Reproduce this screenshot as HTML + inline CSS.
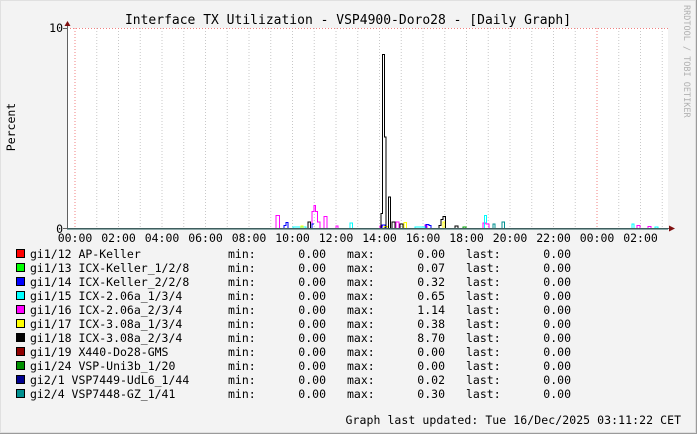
<!DOCTYPE html>
<html><head><meta charset="utf-8"><style>
html,body{margin:0;padding:0;background:#f3f3f3}
svg{display:block}
text{font-family:"DejaVu Sans Mono","Liberation Mono",monospace;font-size:11.5px;fill:#000}
</style></head><body>
<svg width="697" height="434" viewBox="0 0 697 434" xmlns="http://www.w3.org/2000/svg">
<rect x="0" y="0" width="697" height="434" fill="#f3f3f3"/>
<rect x="0.5" y="0.5" width="695" height="432" fill="none" stroke="#e0e0e0"/>
<line x1="696.5" y1="0" x2="696.5" y2="434" stroke="#9a9a9a"/>
<line x1="0" y1="433.5" x2="697" y2="433.5" stroke="#9a9a9a"/>
<rect x="67" y="28" width="601" height="201" fill="#fff"/>
<g stroke="#c8c8c8" stroke-dasharray="1,2" stroke-width="1">
<line x1="96.75" y1="28" x2="96.75" y2="229"/><line x1="118.5" y1="28" x2="118.5" y2="229"/><line x1="140.25" y1="28" x2="140.25" y2="229"/><line x1="162" y1="28" x2="162" y2="229"/><line x1="183.75" y1="28" x2="183.75" y2="229"/><line x1="205.5" y1="28" x2="205.5" y2="229"/><line x1="227.25" y1="28" x2="227.25" y2="229"/><line x1="249" y1="28" x2="249" y2="229"/><line x1="270.75" y1="28" x2="270.75" y2="229"/><line x1="292.5" y1="28" x2="292.5" y2="229"/><line x1="314.25" y1="28" x2="314.25" y2="229"/><line x1="336" y1="28" x2="336" y2="229"/><line x1="357.75" y1="28" x2="357.75" y2="229"/><line x1="379.5" y1="28" x2="379.5" y2="229"/><line x1="401.25" y1="28" x2="401.25" y2="229"/><line x1="423" y1="28" x2="423" y2="229"/><line x1="444.75" y1="28" x2="444.75" y2="229"/><line x1="466.5" y1="28" x2="466.5" y2="229"/><line x1="488.25" y1="28" x2="488.25" y2="229"/><line x1="510" y1="28" x2="510" y2="229"/><line x1="531.75" y1="28" x2="531.75" y2="229"/><line x1="553.5" y1="28" x2="553.5" y2="229"/><line x1="575.25" y1="28" x2="575.25" y2="229"/><line x1="618.75" y1="28" x2="618.75" y2="229"/><line x1="640.5" y1="28" x2="640.5" y2="229"/><line x1="662.25" y1="28" x2="662.25" y2="229"/>
</g>
<g stroke="#f08080" stroke-dasharray="1,2" stroke-width="1">
<line x1="75" y1="28" x2="75" y2="229"/><line x1="597" y1="28" x2="597" y2="229"/>
<line x1="67" y1="28.5" x2="668" y2="28.5"/>
</g>
<g fill="none" stroke-width="1">
<path stroke="#ff00ff" d="M276 228.5V215.5H279.5V228.5M312 228.5V211.5H314V205.5H315.5V211.5H317.5V222H320V228.5M324 228.5V216.5H327V228.5M336 228.5V226H338V228.5M380 228.5V226H383M396 228.5V222H399V228.5M425 228.5V225H427V228.5M483 228.5V223H486V224H489V228.5M637 228.5V225.5H640V228.5M648 228.5V226.5H651V228.5"/>
<path stroke="#0000ff" d="M284 228.5V225.5H286V222.5H288V228.5M312 228.5V224H314M382 228.5V225H385V228.5M426 228.5V224.5H429V225.5H431V228.5"/>
<path stroke="#00ffff" d="M293 228.5V227H306V228.5M350 228.5V223H352.5V228.5M415 228.5V227H425V228.5M484.5 228.5V215.5H486.5V223M502 228.5V227.5M632 228.5V224H634V228.5M655 228.5V227H658V228.5"/>
<path stroke="#ffff00" d="M301 228.5V226H303V228.5M384 228.5V226.5H388V228.5M404 228.5V222.5H406.5V228.5M443 228.5V222H445V228.5"/>
<path stroke="#000" d="M308 228.5V222H310.5V228.5M381 228.5V213.5H382.5V54.5H384.5V137H386V228.5M388.5 228.5V197H390.5V228.5M392 228.5V222H395V228.5M400 228.5V224H403V228.5M439 228.5V225.5H441V219.5H443V216.5H445.5V228.5M455 228.5V226H458V228.5"/>
<path stroke="#009090" d="M493 228.5V224H495V228.5M502 228.5V222H504.5V228.5"/>
<path stroke="#00a000" d="M463 228.5V227H466V228.5"/>
</g>
<line x1="67.5" y1="229" x2="67.5" y2="24" stroke="#606060"/>
<line x1="63" y1="228.5" x2="671" y2="228.5" stroke="#606060"/>
<line x1="67" y1="229" x2="668" y2="229" stroke="#1f5a5a"/>
<polygon points="64.5,26 70.5,26 67.5,21" fill="#7f1010"/>
<polygon points="669,225.5 669,231.5 675,228.5" fill="#7f1010"/>
<g stroke="#606060"><line x1="63" y1="28.5" x2="67" y2="28.5"/></g>
<text x="63" y="32" text-anchor="end">10</text>
<text x="63" y="233" text-anchor="end">0</text>
<text transform="translate(15,127) rotate(-90)" text-anchor="middle">Percent</text>
<g text-anchor="middle" font-size="11">
<text x="75" y="242">00:00</text><text x="118.5" y="242">02:00</text><text x="162" y="242">04:00</text><text x="205.5" y="242">06:00</text><text x="249" y="242">08:00</text><text x="292.5" y="242">10:00</text><text x="336" y="242">12:00</text><text x="379.5" y="242">14:00</text><text x="423" y="242">16:00</text><text x="466.5" y="242">18:00</text><text x="510" y="242">20:00</text><text x="553.5" y="242">22:00</text><text x="597" y="242">00:00</text><text x="640.5" y="242">02:00</text>
</g>
<text x="348" y="24" text-anchor="middle" style="font-size:13px">Interface TX Utilization - VSP4900-Doro28 - [Daily Graph]</text>
<text transform="translate(684,5) rotate(90)" style="font-size:8.5px;fill:#b0b0b0">RRDTOOL / TOBI OETIKER</text>
<g stroke="#000" stroke-width="1">
<rect x="16.5" y="249.5" width="8" height="8" fill="#ff0000"/>
<rect x="16.5" y="263.5" width="8" height="8" fill="#00ff00"/>
<rect x="16.5" y="277.5" width="8" height="8" fill="#0000ff"/>
<rect x="16.5" y="291.5" width="8" height="8" fill="#00ffff"/>
<rect x="16.5" y="305.5" width="8" height="8" fill="#ff00ff"/>
<rect x="16.5" y="319.5" width="8" height="8" fill="#ffff00"/>
<rect x="16.5" y="333.5" width="8" height="8" fill="#000000"/>
<rect x="16.5" y="347.5" width="8" height="8" fill="#900000"/>
<rect x="16.5" y="361.5" width="8" height="8" fill="#009000"/>
<rect x="16.5" y="375.5" width="8" height="8" fill="#000090"/>
<rect x="16.5" y="389.5" width="8" height="8" fill="#009090"/>
</g>
<g>
<text x="30" y="258">gi1/12 AP-Keller</text>
<text x="30" y="272">gi1/13 ICX-Keller_1/2/8</text>
<text x="30" y="286">gi1/14 ICX-Keller_2/2/8</text>
<text x="30" y="300">gi1/15 ICX-2.06a_1/3/4</text>
<text x="30" y="314">gi1/16 ICX-2.06a_2/3/4</text>
<text x="30" y="328">gi1/17 ICX-3.08a_1/3/4</text>
<text x="30" y="342">gi1/18 ICX-3.08a_2/3/4</text>
<text x="30" y="356">gi1/19 X440-Do28-GMS</text>
<text x="30" y="370">gi1/24 VSP-Uni3b_1/20</text>
<text x="30" y="384">gi2/1 VSP7449-UdL6_1/44</text>
<text x="30" y="398">gi2/4 VSP7448-GZ_1/41</text>
</g>
<g>
<text x="228" y="258">min:</text><text x="228" y="272">min:</text><text x="228" y="286">min:</text><text x="228" y="300">min:</text><text x="228" y="314">min:</text><text x="228" y="328">min:</text><text x="228" y="342">min:</text><text x="228" y="356">min:</text><text x="228" y="370">min:</text><text x="228" y="384">min:</text><text x="228" y="398">min:</text>
<text x="347" y="258">max:</text><text x="347" y="272">max:</text><text x="347" y="286">max:</text><text x="347" y="300">max:</text><text x="347" y="314">max:</text><text x="347" y="328">max:</text><text x="347" y="342">max:</text><text x="347" y="356">max:</text><text x="347" y="370">max:</text><text x="347" y="384">max:</text><text x="347" y="398">max:</text>
<text x="466" y="258">last:</text><text x="466" y="272">last:</text><text x="466" y="286">last:</text><text x="466" y="300">last:</text><text x="466" y="314">last:</text><text x="466" y="328">last:</text><text x="466" y="342">last:</text><text x="466" y="356">last:</text><text x="466" y="370">last:</text><text x="466" y="384">last:</text><text x="466" y="398">last:</text>
</g>
<g text-anchor="end">
<text x="326" y="258">0.00</text><text x="326" y="272">0.00</text><text x="326" y="286">0.00</text><text x="326" y="300">0.00</text><text x="326" y="314">0.00</text><text x="326" y="328">0.00</text><text x="326" y="342">0.00</text><text x="326" y="356">0.00</text><text x="326" y="370">0.00</text><text x="326" y="384">0.00</text><text x="326" y="398">0.00</text>
<text x="445" y="258">0.00</text><text x="445" y="272">0.07</text><text x="445" y="286">0.32</text><text x="445" y="300">0.65</text><text x="445" y="314">1.14</text><text x="445" y="328">0.38</text><text x="445" y="342">8.70</text><text x="445" y="356">0.00</text><text x="445" y="370">0.00</text><text x="445" y="384">0.02</text><text x="445" y="398">0.30</text>
<text x="571" y="258">0.00</text><text x="571" y="272">0.00</text><text x="571" y="286">0.00</text><text x="571" y="300">0.00</text><text x="571" y="314">0.00</text><text x="571" y="328">0.00</text><text x="571" y="342">0.00</text><text x="571" y="356">0.00</text><text x="571" y="370">0.00</text><text x="571" y="384">0.00</text><text x="571" y="398">0.00</text>
</g>
<text x="345.5" y="424" textLength="335.5" lengthAdjust="spacing">Graph last updated: Tue 16/Dec/2025 03:11:22 CET</text>
</svg>
</body></html>
